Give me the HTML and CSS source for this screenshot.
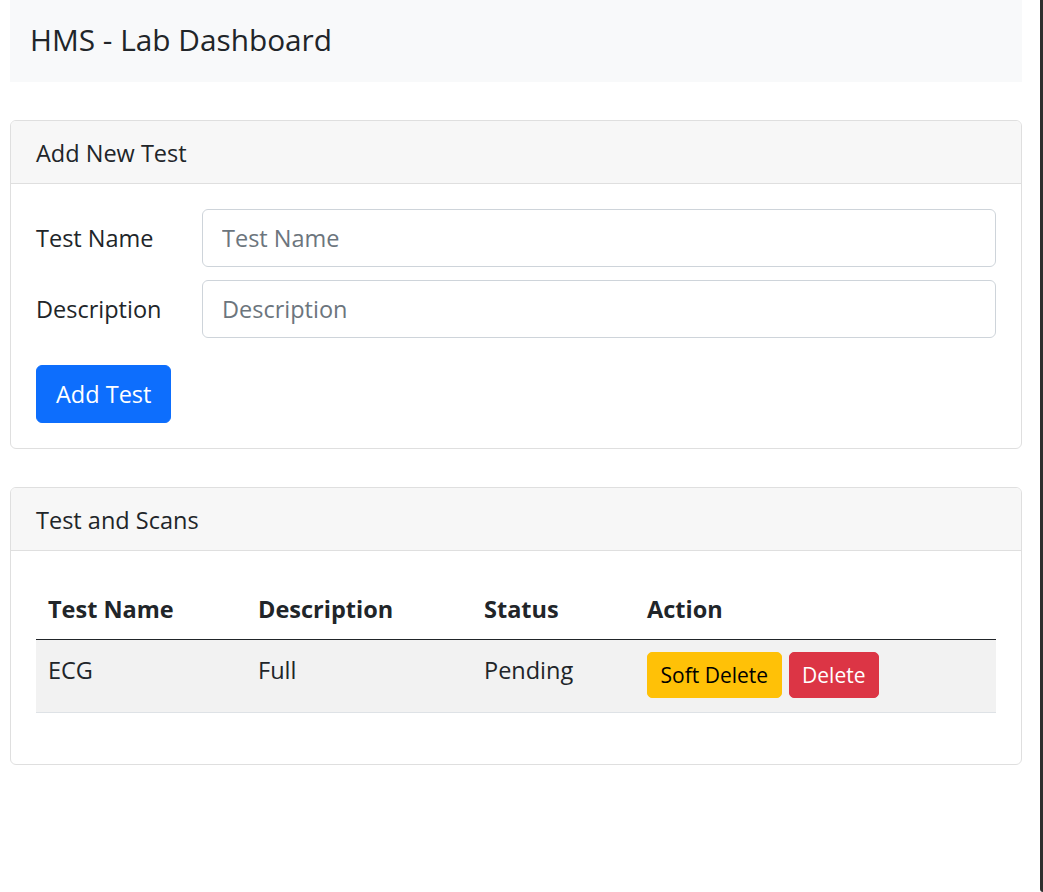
FILE: index.html
```html
<!DOCTYPE html>
<html lang="en">
<head>
<meta charset="utf-8">
<title>HMS - Lab Dashboard</title>
<link rel="stylesheet" href="styles.css">
</head>
<body>
<div class="window-edge"></div>
<div class="page">
  <header class="topbar">
    <h1 class="brand">HMS - Lab Dashboard</h1>
  </header>

  <section class="card">
    <div class="card-header">Add New Test</div>
    <div class="card-body">
      <form class="test-form">
        <div class="form-row">
          <label class="form-label" for="tname">Test Name</label>
          <input class="form-input" id="tname" type="text" placeholder="Test Name">
        </div>
        <div class="form-row">
          <label class="form-label" for="tdesc">Description</label>
          <input class="form-input" id="tdesc" type="text" placeholder="Description">
        </div>
        <div class="form-actions">
          <button type="button" class="btn btn-primary">Add Test</button>
        </div>
      </form>
    </div>
  </section>

  <section class="card">
    <div class="card-header">Test and Scans</div>
    <div class="card-body">
      <table class="table">
        <thead>
          <tr>
            <th class="col-name">Test Name</th>
            <th class="col-desc">Description</th>
            <th class="col-status">Status</th>
            <th class="col-action">Action</th>
          </tr>
        </thead>
        <tbody>
          <tr>
            <td>ECG</td>
            <td>Full</td>
            <td>Pending</td>
            <td class="actions">
              <button type="button" class="btn-sm btn-warning">Soft Delete</button>
              <button type="button" class="btn-sm btn-danger">Delete</button>
            </td>
          </tr>
        </tbody>
      </table>
    </div>
  </section>
</div>
</body>
</html>
```

FILE: styles.css
```css
* {
  box-sizing: border-box;
}

html, body {
  margin: 0;
  padding: 0;
  background: #ffffff;
}

body {
  font-family: "Open Sans", "Noto Sans", "Liberation Sans", sans-serif;
  font-size: 23.5px;
  line-height: 36px;
  color: #212529;
}

.window-edge {
  position: fixed;
  top: 0;
  right: 0;
  bottom: 0;
  width: 3px;
  background: #2e2e2e;
  border-radius: 0 0 0 4px;
}

.page {
  margin: 0 21px 0 10px;
  padding-bottom: 40px;
}

.topbar {
  height: 82px;
  background: #f8f9fa;
  display: flex;
  align-items: center;
  padding-left: 20px;
  padding-bottom: 2px;
}

.brand {
  margin: 0;
  font-size: 29.8px;
  font-weight: 400;
  line-height: 36px;
  color: #212529;
}

.card {
  margin-top: 38px;
  border: 1px solid #dfdfdf;
  border-radius: 6px;
  overflow: hidden;
}

.card-header {
  background: #f7f7f7;
  border-bottom: 1px solid #dfdfdf;
  padding: 14px 25px 12px;
  height: 63px;
  font-size: 23.5px;
  line-height: 36px;
}

.card-body {
  padding: 25px;
}

.test-form {
  display: flex;
  flex-direction: column;
}

.form-row {
  display: flex;
  align-items: center;
  margin-bottom: 13px;
}

.form-label {
  width: 166px;
  flex: none;
}

.form-input {
  flex: 1;
  height: 58px;
  border: 1px solid #ced4da;
  border-radius: 6px;
  padding: 0 19px;
  font-family: inherit;
  font-size: 23.5px;
  color: #212529;
  background: #fff;
  outline: none;
}

.form-input::placeholder {
  color: #6c757d;
  opacity: 1;
}

.form-actions {
  margin-top: 14px;
}

.btn {
  font-family: inherit;
  font-size: 23.5px;
  line-height: 36px;
  height: 58px;
  padding: 0 19px;
  border: 1px solid transparent;
  border-radius: 6px;
  cursor: pointer;
}

.btn-primary {
  background: #0d6efd;
  border-color: #0d6efd;
  color: #fff;
}

.table {
  width: 100%;
  border-collapse: collapse;
  margin-top: 0;
  margin-bottom: 26px;
}

.table th,
.table td {
  text-align: left;
  vertical-align: top;
  padding: 12px 12px;
}

.table th {
  font-weight: 700;
  padding-top: 15px;
  padding-bottom: 12px;
  border-bottom: 1.5px solid #212529;
}

.table tbody tr {
  background: #f2f2f2;
  border-bottom: 1px solid #dee2e6;
}

.table td {
  padding-top: 12px;
  padding-bottom: 14px;
}

.col-name { width: 210px; }
.col-desc { width: 226px; }
.col-status { width: 163px; }

.actions {
  display: flex;
  gap: 7px;
}

.btn-sm {
  font-family: inherit;
  font-size: 21px;
  line-height: 30px;
  height: 46px;
  padding: 0 12.5px;
  border: 1px solid transparent;
  border-radius: 5px;
  cursor: pointer;
}

.btn-warning {
  background: #ffc107;
  border-color: #ffc107;
  color: #000;
}

.btn-danger {
  background: #dc3545;
  border-color: #dc3545;
  color: #fff;
}
```
